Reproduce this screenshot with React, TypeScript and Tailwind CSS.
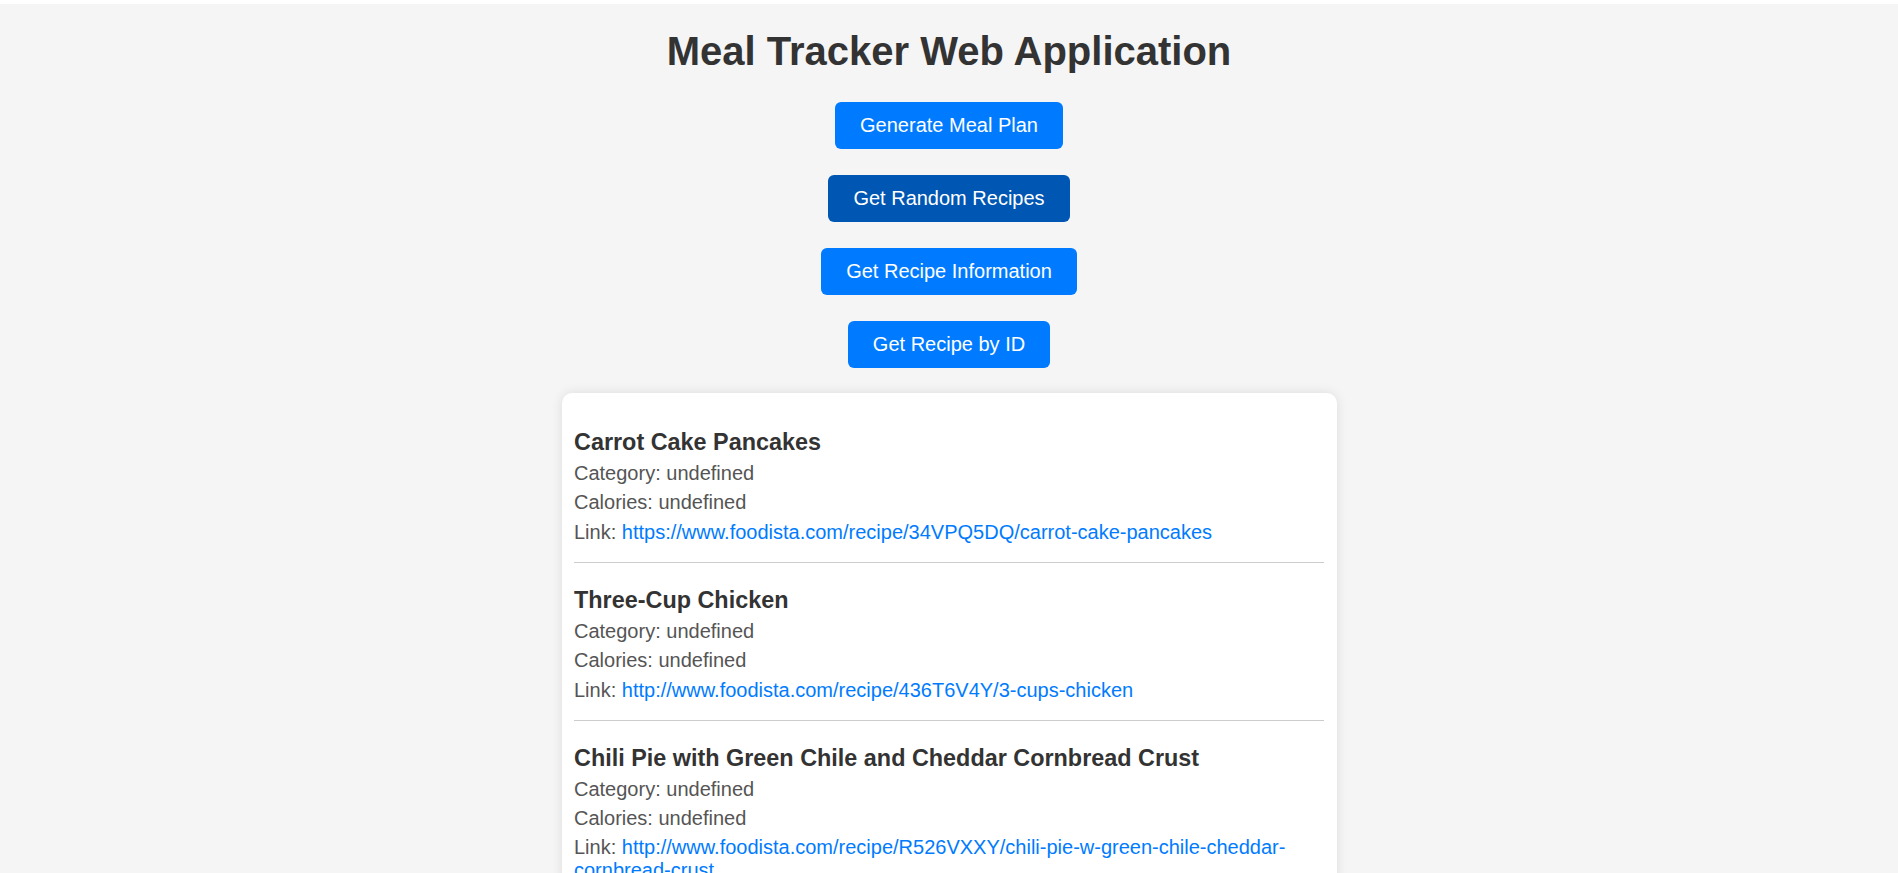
import React from 'react';

type Recipe = {
  title: string;
  url: string;
};

const recipes: Recipe[] = [
  { title: 'Carrot Cake Pancakes', url: 'https://www.foodista.com/recipe/34VPQ5DQ/carrot-cake-pancakes' },
  { title: 'Three-Cup Chicken', url: 'http://www.foodista.com/recipe/436T6V4Y/3-cups-chicken' },
  {
    title: 'Chili Pie with Green Chile and Cheddar Cornbread Crust',
    url: 'http://www.foodista.com/recipe/R526VXXY/chili-pie-w-green-chile-cheddar-cornbread-crust',
  },
];

const buttons = [
  { label: 'Generate Meal Plan', active: false },
  { label: 'Get Random Recipes', active: true },
  { label: 'Get Recipe Information', active: false },
  { label: 'Get Recipe by ID', active: false },
];

function RecipeItem({ recipe }: { recipe: Recipe }) {
  return (
    <div className="border-b border-[#ccc] pb-[18.75px]">
      <h3 className="mt-[23.4px] mb-[6.25px] text-[23.4px] leading-[27px] font-bold text-[#333]">{recipe.title}</h3>
      <div className="flex flex-col gap-[6.25px] text-[20px] leading-[23px] text-[#555]">
        <p>Category: undefined</p>
        <p>Calories: undefined</p>
        <p>
          Link:{' '}
          <a href={recipe.url} className="text-[#007bff]">
            {recipe.url}
          </a>
        </p>
      </div>
    </div>
  );
}

export default function App() {
  return (
    <div className="h-[873px] overflow-hidden bg-white font-['Liberation_Sans',Arial,sans-serif]">
      <div className="mt-[4px] min-h-full bg-[#f5f5f5] flex flex-col items-center">
        <h1 className="mt-[24px] text-[40px] leading-[46px] font-bold text-[#333]">Meal Tracker Web Application</h1>

        <div className="mt-[27.5px] flex flex-col items-center gap-[26px]">
          {buttons.map((b) =>
            b.active ? (
              <button key={b.label} className="h-[47px] px-[25px] rounded-[6px] bg-[#0056b3] text-white text-[20px]">
                {b.label}
              </button>
            ) : (
              <button key={b.label} className="h-[47px] px-[25px] rounded-[6px] bg-[#007bff] text-white text-[20px]">
                {b.label}
              </button>
            )
          )}
        </div>

        <div className="mt-[25.5px] w-[775px] p-[12.5px] bg-white rounded-[10px] shadow-[0_0_12px_rgba(0,0,0,0.1)]">
          {recipes.map((r) => (
            <RecipeItem key={r.title} recipe={r} />
          ))}
        </div>
      </div>
    </div>
  );
}
